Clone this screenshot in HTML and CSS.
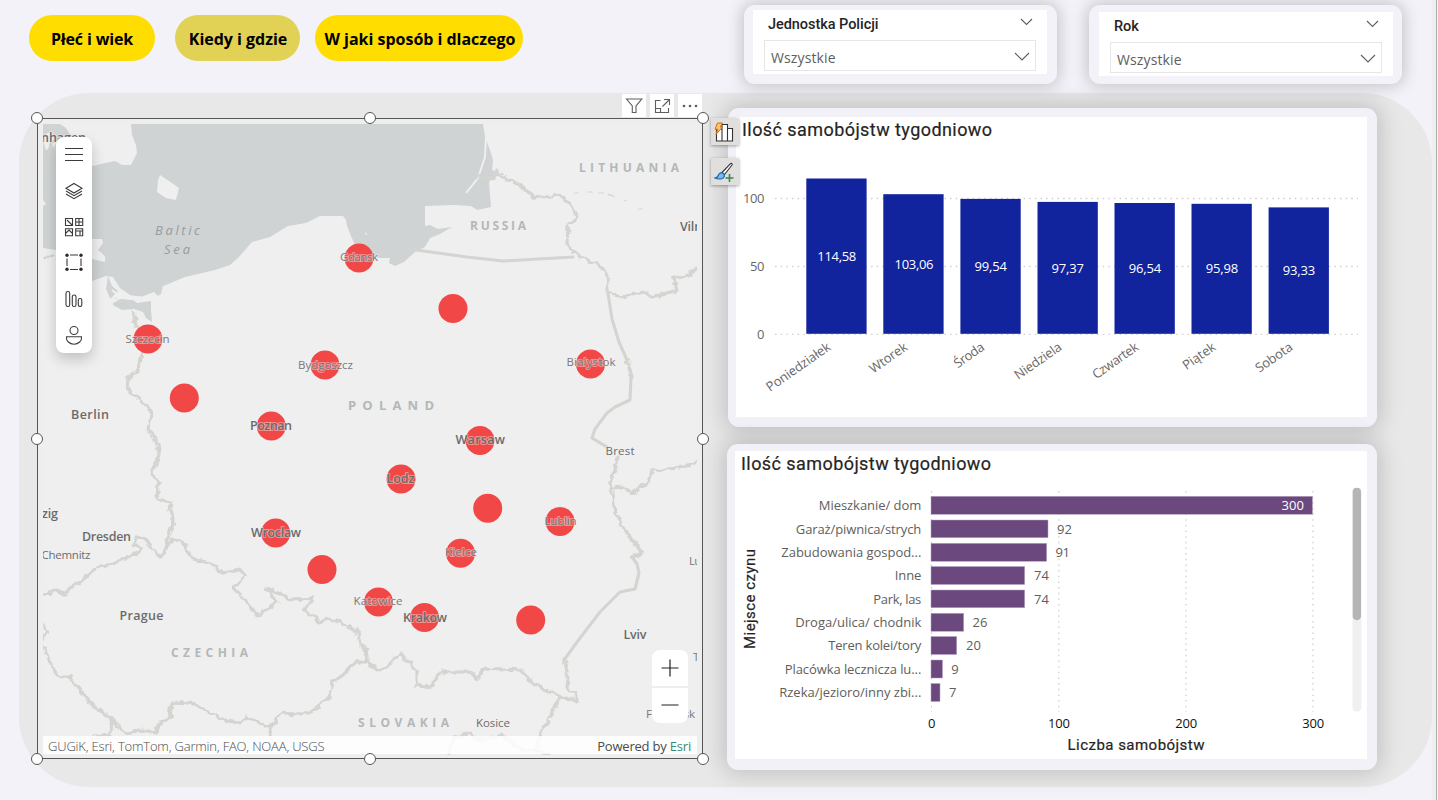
FILE: index.html
```html
<!DOCTYPE html>
<html lang="pl">
<head>
<meta charset="utf-8">
<title>Kiedy i gdzie</title>
<link rel="stylesheet" href="styles.css">
</head>
<body>
<div class="page">
  <header class="top">
    <nav class="nav">
      <a class="pill pill-a">Płeć i wiek</a>
      <a class="pill pill-b">Kiedy i gdzie</a>
      <a class="pill pill-c">W jaki sposób i dlaczego</a>
    </nav>
    <div class="slicers">
      <section class="slicer slicer-unit">
        <div class="slicer-body">
          <div class="slicer-head"><span>Jednostka Policji</span>
            <svg width="13" height="8" viewBox="0 0 13 8"><path d="M1 1l5.500 5.500L12 1"/></svg></div>
          <div class="select"><span>Wszystkie</span>
            <svg width="16" height="10" viewBox="0 0 16 10"><path d="M1 1l7 7 7-7"/></svg></div>
        </div>
      </section>
      <section class="slicer slicer-year">
        <div class="slicer-body">
          <div class="slicer-head"><span>Rok</span>
            <svg width="13" height="8" viewBox="0 0 13 8"><path d="M1 1l5.500 5.500L12 1"/></svg></div>
          <div class="select"><span>Wszystkie</span>
            <svg width="16" height="10" viewBox="0 0 16 10"><path d="M1 1l7 7 7-7"/></svg></div>
        </div>
      </section>
    </div>
  </header>

  <main class="board">
    <section class="map-col">
      <div class="visual-actions">
        <button><svg width="18" height="18" viewBox="0 0 18 18"><path d="M1.500 2h15.300L11 9v6.500H7.300V9z"/></svg></button>
        <button><svg width="18" height="18" viewBox="0 0 18 18"><path d="M7.500 3.500h-5v12h13V11M2.500 11.500h5v4M9.500 9.500l6.500-6.500M11 2.500h5.500V8"/></svg></button>
        <button><svg width="18" height="18" viewBox="0 0 18 18"><g class="dots"><circle cx="3" cy="9" r="1.300"/><circle cx="9" cy="9" r="1.300"/><circle cx="15" cy="9" r="1.300"/></g></svg></button>
      </div>
      <div class="map-frame">
        <svg class="map" width="654" height="631" viewBox="43 124 654 631">
          <defs>
            <filter id="rough" x="-5%" y="-5%" width="110%" height="110%">
              <feTurbulence type="fractalNoise" baseFrequency="0.14" numOctaves="2" seed="4"/>
              <feDisplacementMap in="SourceGraphic" scale="7" xChannelSelector="R" yChannelSelector="G"/>
            </filter>
          </defs>
          <rect class="land" x="43" y="124" width="654" height="631"/>
          <path class="sea" d="M43 124H60L66 128 80 150 84 162 93 166 105 163 115 161 122 165 131 165 137 153 136 145 132 135 131 124H483L485 137 490 150 493 160 492 170 498 172 489 182 491 207 477 210 471 206 453 205 425 206 425 226 430 225 438 229 452 227 440 234 430 238 425 247 415 252 404 262 395 266 389 263 390 258 380 258 372 256 355 245 351 236 347 226 346 220 343 216 320 216 306 223 288 226 270 237 252 242 238 258 230 265 215 270 185 277 161 287 158 296 154 292 141 297 130 295 120 288 113 277 106 276 92 281V259L105 262 105 256 98 250 103 243 102 239 92 239 80 246 56 250 43 248Z"/>
          <path class="land" d="M46 134l6-3 5 8-3 8-8 3-2-6zM43 200l3 4-3 2zM160 175l9 6 10 7-3 12-10-2-9-6 1-12zM365 232l3 3-3-1z"/>
          <path class="sea" d="M113 303l8-4 12 1 4 3 14-2v9l1 12-6-4-3-6-9-3-12 1-9-5zM108 276l4 10 6 5-6 6 8 3-10-2-4-9zM160 288l-2 8 3-2 2-8z"/>
          <path class="coast" d="M112 290l7 6-8 3M121 297l10 2 10-2M486 137l-1 20-7 21-12 15M496 172l-3 8"/>
          <path class="faint" d="M574 193h5m8-1h6m5 1h6m4 2h5m-5-1l7 3m9 3l3 1m11 8h5"/>
          <g class="border" filter="url(#rough)">
            <path d="M45 258l8-3M52 126l4 10-6 12-2 20M133 312l3 13 9 20-3 8-3 17-11 8-1 11 10 9 15 13-2 9-2 10 8 10 3 15-7 18 6 12-1 13 13 5 3 17-4 15-4 17-5 5-8-9-5-8-11-3-2 7 8 3-5 6-15 7-9 4-13 2-7 4-10 10-13 8-5 6-8-4-14 6"/>
            <path d="M163 553l9-13 11 1 4 11 6 7 17 4 13 10 17-3 5 5-12 13 10 10 15 17 19-12-10-15 26 12 19-2-7 12 15 13 8-5 29 12 3 13 8 15"/>
            <path d="M360 645l7 5 1 12 9 8 10-3 13-14 17 17v15l15 2 8-15h30l7 6 8-10 35 2 15 15 22 10 20 7v-7l-10-7 1-11-4-17"/>
            <path d="M632 557l10-4-15-21-12-19-2-16-3-14 5-13 2-13"/>
            <path d="M631 377l-4-17M608 293v-16l-6-10-29-14-6-10 1-16 9-10-5-12-12-10-25 3-15-13-17-7-5-6-5 7-16-3"/>
            <path d="M608 293l15 4 20-5 10 5 24-7-4-12 15-3 9-8M612 488l11-1 10 6 15-11 4-12 28-2 17-6"/>
            <path d="M368 662h-13l-12 13-10 7-3 15-20 15-17 3-10-3-13 15 1 18M270 727l-23-10-7 6-13-2-17-9-20-9-18-1-2 16-10 4-5 11-12-3-18 3-15-15-18-13-22-28-13-2-14-27M111 718l-1 17-18 2M43 623l4 8-4 9"/>
            <path d="M560 698l-10 19-11 18-2 16M448 753l9-16 13-4 10 7 23-5 14 13 20 3 11 3"/>
          </g>
          <g class="border">
            <path d="M564 660l16-22 20-26 20-20 15-3 4-16-2-9-5-7M607 447l-15-9 3-9 12-16 8-6 15-7 1-23M627 360l-8-18-7-23-4-26M409 249l58 8 36 4 70-4"/>
          </g>
          <g class="dot">
            <circle cx="359" cy="258" r="14.500"/><circle cx="148" cy="339" r="14.500"/><circle cx="453" cy="308.500" r="14.500"/>
            <circle cx="325" cy="365" r="14.500"/><circle cx="590.500" cy="364" r="14.500"/><circle cx="184.300" cy="398" r="14.500"/>
            <circle cx="271.300" cy="426" r="14.500"/><circle cx="480" cy="440.500" r="14.500"/><circle cx="401" cy="479" r="14.500"/>
            <circle cx="487.700" cy="508.300" r="14.500"/><circle cx="560" cy="521.500" r="14.500"/><circle cx="275.700" cy="533" r="14.500"/>
            <circle cx="460.500" cy="553.300" r="14.500"/><circle cx="322" cy="569.500" r="14.500"/><circle cx="378.500" cy="602" r="14.500"/>
            <circle cx="424.500" cy="617.500" r="14.500"/><circle cx="530.700" cy="620" r="14.500"/>
          </g>
          <g class="country">
            <text x="579" y="172" textLength="100">LITHUANIA</text>
            <text x="470" y="230" textLength="56">RUSSIA</text>
            <text class="country-main" x="348" y="410" textLength="86">POLAND</text>
            <text x="171" y="657" textLength="77">CZECHIA</text>
            <text x="358" y="727" textLength="91">SLOVAKIA</text>
          </g>
          <g class="sea-name">
            <text x="155" y="235" textLength="45">Baltic</text>
            <text x="164" y="254" textLength="26">Sea</text>
          </g>
          <g class="city">
            <text x="41" y="142" textLength="45">nhagen</text>
            <text x="71" y="419" textLength="38">Berlin</text>
            <text x="250" y="430" textLength="42">Poznan</text>
            <text x="455.500" y="444" textLength="49.500">Warsaw</text>
            <text x="386.500" y="483" textLength="28">Lodz</text>
            <text x="251" y="537" textLength="50">Wroclaw</text>
            <text x="42" y="518" textLength="16">zig</text>
            <text x="82" y="541" textLength="49">Dresden</text>
            <text x="119.500" y="619.500" textLength="44">Prague</text>
            <text x="403" y="622" textLength="44">Krakow</text>
            <text x="623.500" y="639" textLength="23">Lviv</text>
            <text x="680" y="231" textLength="39">Vilnius</text>
          </g>
          <g class="town">
            <text x="340" y="261" textLength="38">Gdansk</text>
            <text x="125.500" y="343" textLength="44">Szczecin</text>
            <text x="298" y="368.500" textLength="55">Bydgoszcz</text>
            <text x="566.500" y="366" textLength="49">Bialystok</text>
            <text class="strong" x="605.500" y="455" textLength="29">Brest</text>
            <text x="544.500" y="525" textLength="32">Lublin</text>
            <text x="445" y="556" textLength="32">Kielce</text>
            <text class="strong" x="41.500" y="559" textLength="49">Chemnitz</text>
            <text x="353.500" y="605" textLength="49">Katowice</text>
            <text class="strong" x="476" y="727" textLength="34">Kosice</text>
            <text x="689" y="565" textLength="26">Lutsk</text>
            <text x="693" y="661" textLength="44">Ternopil</text>
            <text x="646" y="718" textLength="49">Frankivsk</text>
          </g>
        </svg>
        <div class="map-credits"><span class="sources">GUGiK, Esri, TomTom, Garmin, FAO, NOAA, USGS</span><span class="powered">Powered by <em>Esri</em></span></div>
        <div class="map-tools">
          <svg width="36" height="216" viewBox="0 0 36 216">
            <path d="M9 11.500h18M9 17.500h18M9 23.500h18"/>
            <path d="M18 46.500l8 4.800-8 4.700-8-4.700zM10 54l8 4.700 8-4.700M10 57l8 4.700 8-4.700"/>
            <path d="M9.500 81.500h7v7h-7zM19.700 81.500h7v7h-7zM9.500 91.700h7v7h-7zM19.700 91.700h7v7h-7zM11 83l2 2 3 3M20 85h3v-3M23 88v-3h3M10 96l3-3 3 3M20 94h7M24 94v4"/>
            <path d="M14 118h8M14 132.500h8M11 121.500v7.500M25 121.500v7.500"/>
            <g class="solid"><circle cx="11" cy="118.300" r="1.700"/><circle cx="25" cy="118.300" r="1.700"/><circle cx="11" cy="132.300" r="1.700"/><circle cx="25" cy="132.300" r="1.700"/></g>
            <rect x="10" y="154.500" width="3.700" height="15" rx="1.800"/><rect x="16.300" y="158" width="3.700" height="11.500" rx="1.800"/><rect x="22.300" y="161.500" width="3.500" height="8" rx="1.700"/>
            <circle cx="18" cy="193.500" r="4"/><path d="M10.500 199.800h15c.6 4-3 7.400-7.500 7.400s-8.100-3.400-7.500-7.400z"/>
          </svg>
        </div>
        <div class="map-zoom">
          <span><svg width="18" height="18" viewBox="0 0 18 18"><path d="M.5 9h17M9 .5v17"/></svg></span>
          <span><svg width="18" height="18" viewBox="0 0 18 18"><path d="M.5 9h17"/></svg></span>
        </div>
        <i class="handle h-nw"></i><i class="handle h-n"></i><i class="handle h-ne"></i>
        <i class="handle h-w"></i><i class="handle h-e"></i>
        <i class="handle h-sw"></i><i class="handle h-s"></i><i class="handle h-se"></i>
        <div class="side-actions">
          <button><svg width="22" height="22" viewBox="0 0 22 22"><path class="ink" d="M3.500 20V8h5.500V3.500h5.500V20zM9 8v12M14.500 7.500h5V20h-5z"/><path class="bolt" d="M4.500 2h5L7.300 6h2.200L3 13.500l1.700-5.300H2z"/></svg></button>
          <button><svg width="22" height="22" viewBox="0 0 22 22"><path class="ink" d="M9 11.500l8.500-8.800c1-.8 2.200.3 1.500 1.300L11.500 13.500z"/><path class="paint" d="M2 17c2-.3 3-1.300 3.500-3 .7-2.300 3.300-3 5-1.300s1 4.300-1.700 5C6.500 18.300 4 18 2 17z"/><path class="plus" d="M16.500 13v8M12.500 17h8"/></svg></button>
        </div>
      </div>
    </section>

    <div class="chart-col">
      <section class="card card-week">
        <div class="card-body">
          <h2>Ilość samobójstw tygodniowo</h2>
          <svg class="chart" width="631" height="271" viewBox="736 146 631 271">
            <path class="grid" d="M775 198.500h583M775 266.500h583M775 334.300h583"/>
            <g class="axis end"><text x="764.500" y="203" textLength="21.500">100</text><text x="764.500" y="271" textLength="14.500">50</text><text x="764.500" y="339" textLength="7.500">0</text></g>
            <g class="col">
              <rect x="806.300" y="178.500" width="60.300" height="155.300"/><rect x="883.300" y="194.200" width="60.300" height="139.600"/>
              <rect x="960.400" y="198.900" width="60.300" height="134.900"/><rect x="1037.500" y="201.900" width="60.300" height="131.900"/>
              <rect x="1114.500" y="203" width="60.300" height="130.800"/><rect x="1191.500" y="203.800" width="60.300" height="130"/>
              <rect x="1268.600" y="207.400" width="60.300" height="126.400"/>
            </g>
            <g class="col-value">
              <text x="836.800" y="261" textLength="39">114,58</text><text x="914" y="269" textLength="39">103,06</text>
              <text x="990.700" y="271" textLength="32.500">99,54</text><text x="1067.700" y="273" textLength="32.500">97,37</text>
              <text x="1144.900" y="273" textLength="32.500">96,54</text><text x="1222" y="273" textLength="32.500">95,98</text>
              <text x="1298.900" y="275" textLength="32.500">93,33</text>
            </g>
            <g class="axis end">
              <text transform="translate(831.500 349) rotate(-35)" textLength="75">Poniedziałek</text>
              <text transform="translate(908.500 349) rotate(-35)" textLength="43">Wtorek</text>
              <text transform="translate(985.500 349) rotate(-35)" textLength="34">Środa</text>
              <text transform="translate(1062.600 349) rotate(-35)" textLength="54">Niedziela</text>
              <text transform="translate(1139.600 349) rotate(-35)" textLength="53">Czwartek</text>
              <text transform="translate(1216.700 349) rotate(-35)" textLength="37">Piątek</text>
              <text transform="translate(1293.700 349) rotate(-35)" textLength="42">Sobota</text>
            </g>
          </svg>
        </div>
      </section>
      <section class="card card-place">
        <div class="card-body">
          <h2>Ilość samobójstw tygodniowo</h2>
          <svg class="chart" width="632" height="279" viewBox="735 480 632 279">
            <path class="grid" d="M931.500 491v221M1058.800 491v221M1186 491v221M1313 491v221"/>
            <g class="row">
              <rect x="931" y="496.300" width="381.500" height="18"/><rect x="931" y="520" width="117" height="17.700"/>
              <rect x="931" y="543.300" width="115.700" height="18"/><rect x="931" y="566.500" width="93.700" height="18"/>
              <rect x="931" y="590" width="93.700" height="17.700"/><rect x="931" y="613.300" width="32.700" height="18"/>
              <rect x="931" y="636.500" width="25.700" height="18"/><rect x="931" y="660" width="11.500" height="18"/>
              <rect x="931" y="683.500" width="9" height="18"/>
            </g>
            <g class="label end">
              <text x="921.300" y="510" textLength="102.500">Mieszkanie/ dom</text><text x="921.300" y="534" textLength="125.500">Garaż/piwnica/strych</text>
              <text x="921.300" y="557" textLength="140">Zabudowania gospod...</text><text x="921.300" y="580" textLength="26.500">Inne</text>
              <text x="921.300" y="604" textLength="48">Park, las</text><text x="921.300" y="627" textLength="126">Droga/ulica/ chodnik</text>
              <text x="921.300" y="650" textLength="93">Teren kolei/tory</text><text x="921.300" y="674" textLength="136.500">Placówka lecznicza lu...</text>
              <text x="921.300" y="697" textLength="142">Rzeka/jezioro/inny zbi...</text>
            </g>
            <g class="label">
              <text class="inside" x="1281.500" y="510" textLength="22.500">300</text>
              <text x="1057" y="534" textLength="15">92</text><text x="1055.500" y="557" textLength="14.500">91</text>
              <text x="1034" y="580" textLength="15">74</text><text x="1034" y="604" textLength="15">74</text>
              <text x="972.500" y="627" textLength="15">26</text><text x="966" y="650" textLength="15">20</text>
              <text x="951.300" y="674">9</text><text x="949" y="697">7</text>
            </g>
            <g class="tick">
              <text x="931.800" y="728">0</text><text x="1059" y="728" textLength="22">100</text>
              <text x="1186.200" y="728" textLength="22">200</text><text x="1313.300" y="728" textLength="22">300</text>
            </g>
            <text class="axis-title" x="1136" y="750" textLength="137">Liczba samobójstw</text>
            <text class="axis-title" transform="translate(755 599) rotate(-90)" textLength="100">Miejsce czynu</text>
            <rect class="track" x="1352.500" y="488" width="9" height="223.500" rx="4.500"/>
            <rect class="thumb" x="1352.700" y="487.700" width="8.300" height="132.500" rx="4.100"/>
          </svg>
        </div>
      </section>
    </div>
  </main>
  <div class="edge"></div>
</div>
</body>
</html>
```
FILE: styles.css
```css
* { box-sizing: border-box; }
body { margin: 0; background: #f3f2f8; font-family: "Open Sans", "Noto Sans", sans-serif; overflow: hidden; }
.page { position: relative; width: 1438px; height: 800px; overflow: hidden; }
.edge { position: absolute; top: 0; right: 1px; width: 5px; height: 800px; background: #efeff0; border-right: 1px solid #adadad; }

.top { display: flex; height: 93px; padding-left: 29px; }
.nav { display: flex; width: 715px; padding-top: 15px; }
.pill { display: flex; align-items: center; justify-content: center; height: 46px; padding-top: 2px; border-radius: 23px; background: #ffdd00; color: #000; font-size: 16px; font-weight: 700; letter-spacing: -.02px; white-space: nowrap; }
.pill-a { width: 126px; letter-spacing: -.15px; }
.pill-b { width: 125px; margin-left: 20px; padding-left: 1px; background: #e1d154; }
.pill-c { width: 208px; margin-left: 15px; padding-left: 2px; }

.slicers { display: flex; gap: 32px; padding-top: 5px; }
.slicer { width: 313px; height: 79px; border-radius: 11px; background: #f3f2f8; box-shadow: 0 0 16px 2px rgba(0,0,0,.2); }
.slicer-unit { padding: 5px 10px 10px 9px; }
.slicer-year { padding: 7px 9px 8px 10px; }
.slicer-body { height: 64px; padding: 0 11px; background: #fff; }
.slicer-head { display: flex; align-items: center; justify-content: space-between; height: 30px; padding: 0 3px 2px 4px; font-family: Roboto, sans-serif; font-size: 14.5px; font-weight: 500; letter-spacing: -.05px; color: #252423; }
.slicer svg { fill: none; stroke: #605e5c; stroke-width: 1.1; }
.slicer-head svg { margin-top: -4px; }
.select { display: flex; align-items: center; justify-content: space-between; height: 31px; padding: 3px 5px 0 6px; border: 1px solid #e6e6e6; font-size: 14px; letter-spacing: .12px; color: #605e5c; }

.board { display: flex; width: 1413px; height: 694px; margin-left: 19px; padding-left: 18px; border-radius: 70px; background: #e8e8e8; }
.map-col { width: 666px; }
.visual-actions { display: flex; justify-content: flex-end; gap: 4px; height: 25px; padding: 1px 1px 0 0; }
.visual-actions button { display: flex; align-items: center; justify-content: center; width: 24px; height: 23px; padding: 0 1px 0 0; border: 0; background: #fff; }
.visual-actions svg { fill: none; stroke: #605e5c; stroke-width: 1.1; }
.visual-actions .dots { fill: #605e5c; stroke: none; }

.map-frame { position: relative; width: 666px; height: 641px; padding: 5px; border: 1px solid #555; background: #eee; }
.map { display: block; }
.land { fill: #efefef; }
.sea { fill: #cfd3d4; }
.coast { fill: none; stroke: #efefef; stroke-width: 2; }
.faint { fill: none; stroke: #d5d8d8; stroke-width: 1; }
.border { fill: none; stroke: #d4d4d1; stroke-width: 3.1; stroke-linejoin: round; stroke-linecap: round; }
.dot { fill: #f24747; }
.map text { paint-order: stroke; stroke: rgba(240,240,240,.45); stroke-width: 2px; stroke-linejoin: round; }
.country { font-size: 12px; font-weight: 700; fill: #b3b8b8; }
.country-main { font-size: 13px; }
.sea-name { font-size: 13px; font-style: italic; fill: #979c9e; }
.map .sea-name text { stroke: none; }
.city { font-size: 12.5px; font-weight: 600; fill: #6b6b6b; }
.town { font-size: 11.5px; font-weight: 500; fill: #787878; }
.town .strong { fill: #6c6c6c; }
.map-credits { position: absolute; left: 5px; right: 5px; bottom: 4px; display: flex; align-items: center; justify-content: space-between; height: 18px; padding: 2px 6px 0 5px; background: rgba(255,255,255,.85); font-size: 13px; line-height: 16px; white-space: nowrap; color: #4a4a4a; }
.sources { font-weight: 300; letter-spacing: -.18px; }
.powered { letter-spacing: -.2px; }
.map-credits em { font-style: normal; color: #358b73; }
.map-tools { position: absolute; left: 18px; top: 18px; width: 36px; height: 216px; border-radius: 8px; background: #fff; box-shadow: 0 6px 14px rgba(0,0,0,.2); }
.map-tools svg { display: block; fill: none; stroke: #3b3b3b; stroke-width: 1.1; }
.map-tools .solid { fill: #2b2b2b; stroke: none; }
.map-zoom { position: absolute; right: 14px; top: 531px; display: grid; grid-template-rows: 36px 35px; gap: 2px; width: 36px; border-radius: 8px; background: #eee; overflow: hidden; }
.map-zoom span { display: flex; align-items: center; justify-content: center; padding: 0 1px 1px 0; background: #fff; }
.map-zoom svg { stroke: #222; stroke-width: 1.2; }
.handle { position: absolute; width: 12px; height: 12px; border: 1.5px solid #555; border-radius: 50%; background: #fff; transform: translate(-50%, -50%); }
.h-nw, .h-n, .h-ne { top: -1px; }
.h-w, .h-e { top: 320px; }
.h-sw, .h-s, .h-se { top: 640px; }
.h-nw, .h-w, .h-sw { left: -1px; }
.h-n, .h-s { left: 332px; }
.h-ne, .h-e, .h-se { left: 665px; }
.side-actions { position: absolute; z-index: 2; left: 673px; top: -1px; display: grid; gap: 13px; }
.side-actions button { display: flex; align-items: center; justify-content: center; width: 28px; height: 27px; padding: 0 2px 0 0; border: 0; background: #e1dfdd; box-shadow: 0 1px 3px rgba(0,0,0,.35); }
.ink { fill: #fff; stroke: #333; stroke-width: 1.1; }
.bolt { fill: #fbc56d; stroke: #d9690c; stroke-width: 1; }
.paint { fill: #7db8ea; stroke: #1763a8; stroke-width: 1.1; }
.plus { stroke: #3c8651; stroke-width: 1.6; }

.chart-col { display: flex; flex-direction: column; margin-left: 24px; padding-top: 15px; }
.card { width: 650px; border-radius: 11px; background: #f2f1f7; box-shadow: 0 0 22px 4px rgba(0,0,0,.17); }
.card-week { width: 649px; height: 319px; margin-left: 1px; padding: 9px 10px 10px 8px; }
.card-place { height: 326px; margin-top: 17px; padding: 7px 10px 11px 8px; }
.card-body { height: 100%; background: #fff; }
.card h2 { height: 29px; margin: 0; padding-left: 6px; font: 400 18px/26px Roboto, sans-serif; letter-spacing: .43px; color: #252423; white-space: nowrap; -webkit-text-stroke: .2px #252423; }
.chart { display: block; }
.grid { fill: none; stroke: #d0d0d0; stroke-width: 1.3; stroke-dasharray: 1.5 4.15; }
.axis { font-size: 13px; fill: #6a6866; }
.end { text-anchor: end; }
.col rect { fill: #12239e; }
.col-value { font-size: 13px; fill: #fff; text-anchor: middle; }
.row rect { fill: #6b497f; stroke: #b7a5c1; stroke-width: .5; }
.label { font-size: 13px; fill: #605e5c; }
.label .inside { fill: #fff; }
.tick { font-size: 13px; fill: #111; text-anchor: middle; }
.axis-title { font-family: Roboto, sans-serif; font-size: 15px; fill: #252423; stroke: #252423; stroke-width: .2px; text-anchor: middle; }
.track { fill: #f0f0f0; }
.thumb { fill: #b5b5b5; }
```
